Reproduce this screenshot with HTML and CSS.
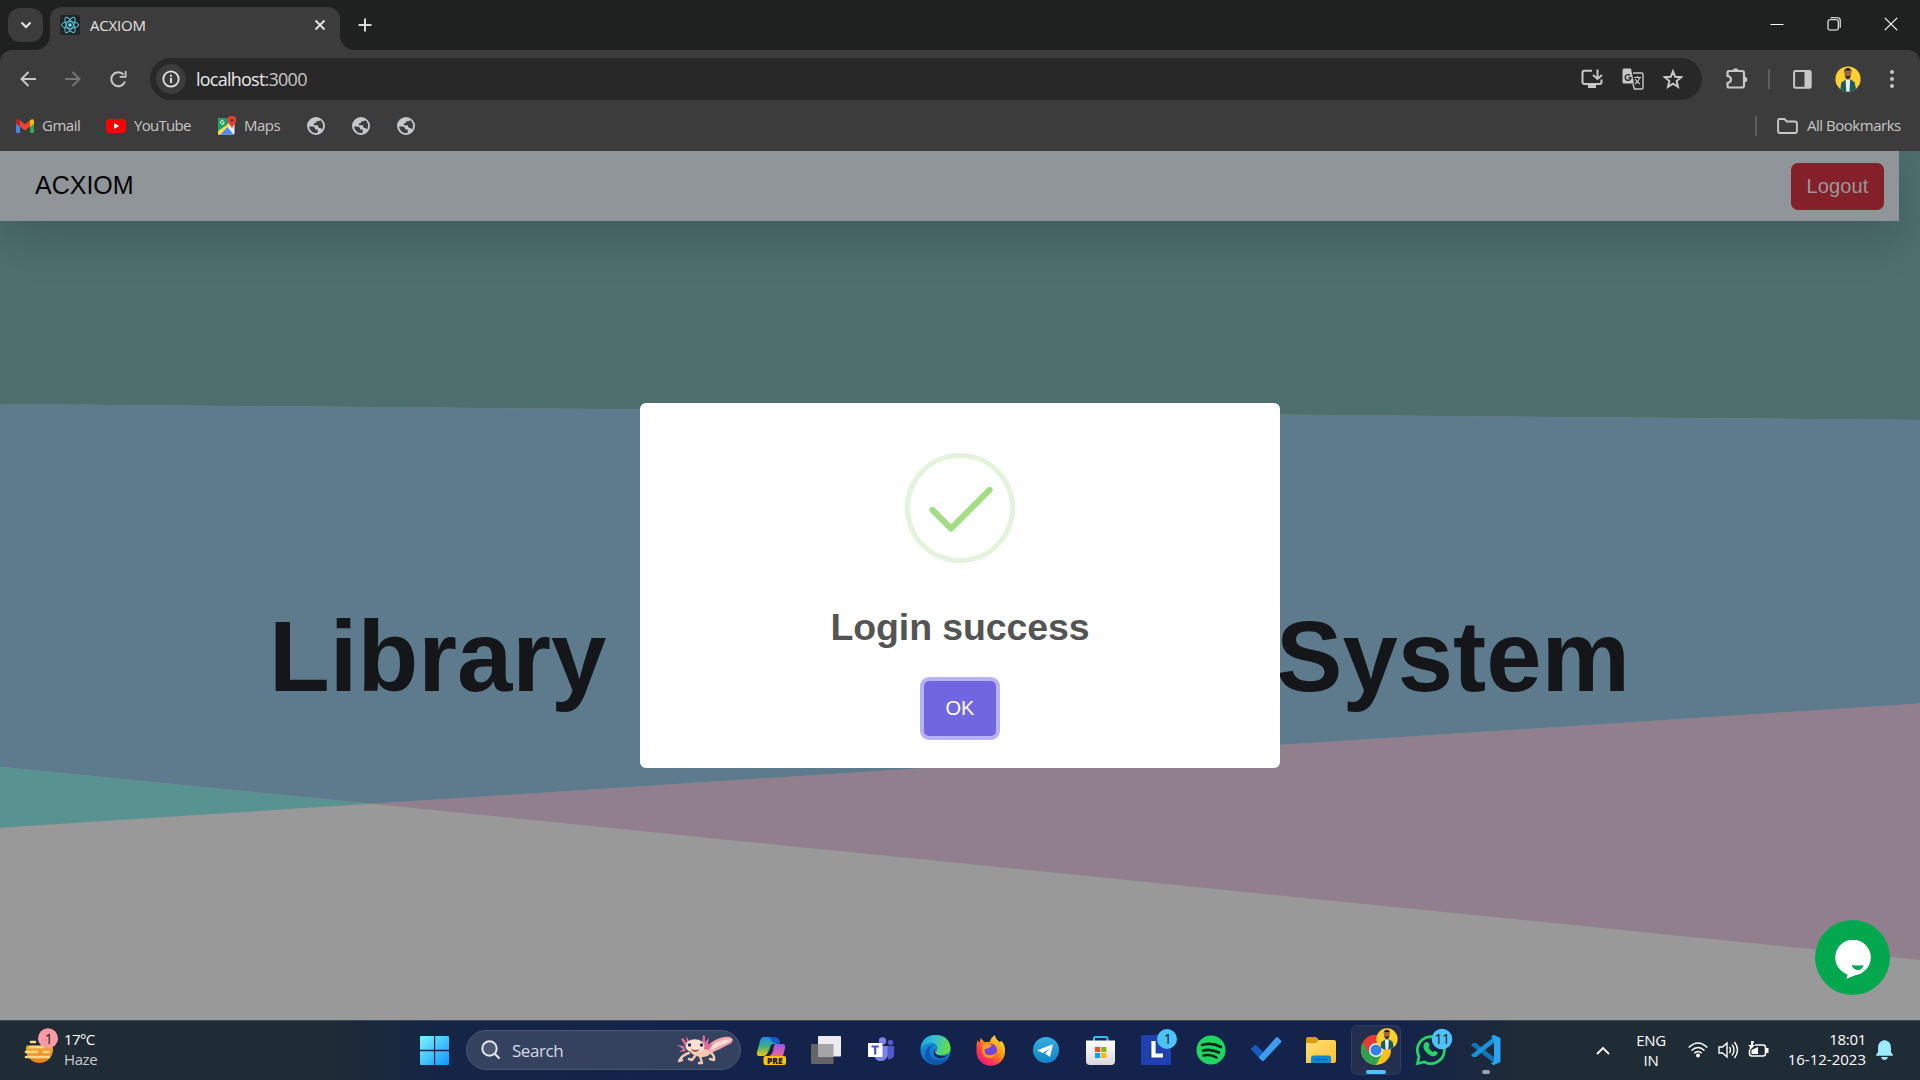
FILE: index.html
```html
<!DOCTYPE html>
<html lang="en">
<head>
<meta charset="utf-8">
<title>ACXIOM</title>
<link rel="stylesheet" href="styles.css">
</head>
<body>
<svg width="0" height="0" class="defs">
  <defs>
    <linearGradient id="win" x1="0" y1="0" x2="1" y2="1"><stop offset="0" stop-color="#7df3ff"/><stop offset="1" stop-color="#0f96fb"/></linearGradient>
    <linearGradient id="copA" x1="0" y1="0" x2="0" y2="1"><stop offset="0" stop-color="#1a8df0"/><stop offset=".5" stop-color="#42ae7d"/><stop offset="1" stop-color="#f4c70c"/></linearGradient>
    <linearGradient id="copB" x1="0" y1="0" x2="0" y2="1"><stop offset="0" stop-color="#9a57f0"/><stop offset="1" stop-color="#f2648f"/></linearGradient>
    <linearGradient id="edgeA" x1="0" y1="0" x2="1" y2=".3"><stop offset="0" stop-color="#1b9de2"/><stop offset=".5" stop-color="#35c1d0"/><stop offset="1" stop-color="#62dc4a"/></linearGradient>
    <linearGradient id="edgeB" x1="0" y1="0" x2="0" y2="1"><stop offset="0" stop-color="#1b9de2"/><stop offset="1" stop-color="#0c64c5"/></linearGradient>
    <linearGradient id="fox" x1="1" y1="0" x2=".2" y2="1"><stop offset="0" stop-color="#fff44f"/><stop offset=".45" stop-color="#ff980e"/><stop offset=".75" stop-color="#ff3750"/><stop offset="1" stop-color="#e31587"/></linearGradient>
    <linearGradient id="fold" x1="0" y1="0" x2="1" y2="1"><stop offset="0" stop-color="#ffe07a"/><stop offset="1" stop-color="#fbc02d"/></linearGradient>
    <linearGradient id="store" x1="0" y1="0" x2="0" y2="1"><stop offset="0" stop-color="#fff"/><stop offset="1" stop-color="#d9d9dd"/></linearGradient>
    <linearGradient id="tg" x1="0" y1="0" x2="0" y2="1"><stop offset="0" stop-color="#37aee2"/><stop offset="1" stop-color="#1283c4"/></linearGradient>
    <linearGradient id="sun" x1="0" y1="0" x2="0" y2="1"><stop offset="0" stop-color="#f6c445"/><stop offset="1" stop-color="#ef7a17"/></linearGradient>
    <clipPath id="round"><circle cx="13" cy="13" r="12.6"/></clipPath>
    <symbol id="globe" viewBox="0 0 24 24"><path fill="#c4c7cb" d="M12 0a12 12 0 1 0 0 24 12 12 0 0 0 0-24zM2.700 12.600H7c2.200 0 4 1.700 4 3.900h3.300v4.500A9.300 9.300 0 0 1 2.700 12.600zm17.400 3.900c-1-1.600-2.200-2-4.200-2l-1.600-3.400H9.200V8.300c2.600 0 3.200-.6 3.200-2.800h2.800c1.300 0 2-.7 2.200-1.500a9.400 9.400 0 0 1 2.700 12.500z"/></symbol>
    <symbol id="person" viewBox="0 0 26 26"><g clip-path="url(#round)"><rect width="26" height="26" fill="#fdd02f"/><path fill="#1d5a5c" d="M5 26l1.300-9.500 5-3.200h4l4.300 3 2 9.700z"/><path fill="#e8f2f2" d="M10.600 13.500h4.500l-.6 12.500h-3.200z"/><ellipse cx="12.800" cy="7.700" rx="3.300" ry="4.500" fill="#9a6647"/><path fill="#231a18" d="M9 7.200c-.6-7 8.400-7 7.700 0l-.9-2.600H10zM10 9.500c1 1.200 4.600 1.200 5.600 0-.3 4.800-5.200 4.800-5.600 0z"/></g></symbol>
  </defs>
</svg>

<header class="tabstrip">
  <button class="tab-search"><svg width="12" height="8" viewBox="0 0 12 8"><path d="M1.500 1.500L6 6l4.500-4.500" fill="none" stroke="#e3e3e3" stroke-width="2.200"/></svg></button>
  <div class="tab">
    <svg class="favicon" viewBox="0 0 20 20"><rect width="20" height="20" rx="2" fill="#222526"/><g fill="none" stroke="#58c4dc" stroke-width="1"><ellipse cx="10" cy="10" rx="8.600" ry="3.300"/><ellipse cx="10" cy="10" rx="8.600" ry="3.300" transform="rotate(60 10 10)"/><ellipse cx="10" cy="10" rx="8.600" ry="3.300" transform="rotate(120 10 10)"/></g><circle cx="10" cy="10" r="1.700" fill="#6fe0f5"/></svg>
    <span class="tab-title">ACXIOM</span>
    <svg width="12" height="12" viewBox="0 0 12 12"><path d="M1.500 1.500l9 9m0-9l-9 9" stroke="#e3e3e3" stroke-width="1.900"/></svg>
  </div>
  <svg class="new-tab" width="14" height="14" viewBox="0 0 14 14"><path d="M7 .5v13M.5 7h13" stroke="#d8d8d8" stroke-width="2"/></svg>
  <div class="window-controls">
    <svg width="14" height="14" viewBox="0 0 14 14"><path d="M.5 7.500h13" stroke="#fff" stroke-width="1"/></svg>
    <svg width="14" height="14" viewBox="0 0 14 14" fill="none" stroke="#fff" stroke-width="1.100"><rect x="1" y="2.700" width="10.300" height="10.300" rx="1.800"/><path d="M3.500.7h7.200q2.500 0 2.500 2.500v7.500"/></svg>
    <svg width="14" height="14" viewBox="0 0 14 14"><path d="M.8.8l12.400 12.400m0-12.400L.8 13.200" stroke="#fff" stroke-width="1.200"/></svg>
  </div>
</header>

<div class="chrome">
  <div class="toolbar">
    <div class="nav-buttons">
      <svg width="16" height="16" viewBox="0 0 16 16"><path d="M16 8H2M8.500 1L1.500 8l7 7" fill="none" stroke="#c7c7c7" stroke-width="2"/></svg>
      <svg width="16" height="16" viewBox="0 0 16 16"><path d="M0 8h14M7.500 1l7 7-7 7" fill="none" stroke="#757575" stroke-width="2"/></svg>
      <svg width="17" height="17" viewBox="0 0 17 17"><path d="M15 10.500A7 7 0 1 1 13.500 3.500" fill="none" stroke="#c7c7c7" stroke-width="2"/><path d="M16.500 0v6.800H9.700V5h5V0z" fill="#c7c7c7"/></svg>
    </div>
    <div class="omnibox">
      <span class="site-info"><svg width="18" height="18" viewBox="0 0 18 18"><circle cx="9" cy="9" r="7.700" fill="none" stroke="#e3e3e3" stroke-width="1.800"/><path d="M9 8v5M9 4.800v1.900" stroke="#e3e3e3" stroke-width="1.900"/></svg></span>
      <span class="url">localhost<span class="port">:3000</span></span>
      <div class="omni-icons">
        <svg width="22" height="20" viewBox="0 0 22 20"><path d="M11 1.800H3.500Q1.500 1.800 1.500 4v9q0 2 2 2h15q2 0 2-2v-2.500" fill="none" stroke="#c7c7c7" stroke-width="2"/><path d="M7 15h8v4H7z" fill="#c7c7c7"/><path d="M16.500.5v9M12 6l4.500 4L21 6" fill="none" stroke="#c7c7c7" stroke-width="2"/></svg>
        <svg width="22" height="22" viewBox="0 0 22 22"><path d="M2 .5h7l3 15H2q-1.500 0-1.500-1.500V2Q.5.5 2 .5z" fill="#c7c7c7"/><path d="M11 5h8.500q1.500 0 1.500 1.500V20q0 1-1.500 1H12.500l-1.600-5" fill="none" stroke="#c7c7c7" stroke-width="1.400"/><path d="M8.200 7.500a2.900 2.900 0 1 0 .8 2.200H6.300" fill="none" stroke="#292929" stroke-width="1.400"/><path d="M12 9.500h7M15.500 8v1.500M17.800 9.500q-1.300 4-4.800 6.500M13.200 11q1.500 3 4.800 5" fill="none" stroke="#c7c7c7" stroke-width="1.200"/></svg>
        <svg width="20" height="20" viewBox="0 0 20 20"><path d="M10 2.300l2.200 5.500 5.900.4-4.500 3.800 1.400 5.800-5-3.200-5 3.200L6.400 12 1.900 8.200l5.900-.4z" fill="none" stroke="#c7c7c7" stroke-width="2"/></svg>
      </div>
    </div>
    <div class="toolbar-icons">
      <svg width="22" height="22" viewBox="0 0 22 22"><path d="M3 3h13q2 0 2 2v12.500q0 2-2 2H3q-1.500 0-1.500-1.500v-3q3.500-.5 3.500-3.500T1.500 8V4.500Q1.500 3 3 3z" fill="none" stroke="#c7c7c7" stroke-width="2.200"/><path d="M6.800 3a2.800 2.800 0 0 1 5.600 0zM18.500 8.700a2.800 2.800 0 0 1 0 5.600z" fill="#c7c7c7"/></svg>
      <i class="sep"></i>
      <svg width="19" height="19" viewBox="0 0 19 19"><rect x="1.100" y="1.100" width="16.600" height="16.600" rx="1.500" fill="none" stroke="#c7c7c7" stroke-width="2"/><path d="M11.500 1H17v17h-5.500z" fill="#c7c7c7"/></svg>
      <svg class="avatar" width="26" height="26"><use href="#person"/></svg>
      <svg width="4" height="18" viewBox="0 0 4 18" fill="#c7c7c7"><circle cx="2" cy="2" r="2"/><circle cx="2" cy="9" r="2"/><circle cx="2" cy="16" r="2"/></svg>
    </div>
  </div>
  <div class="bookmarks">
    <svg width="18" height="14" viewBox="0 0 18 14"><path fill="#4285f4" d="M0 2.500l4 3V14H1.200Q0 14 0 12.800z"/><path fill="#34a853" d="M18 2.500l-4 3V14h2.800Q18 14 18 12.800z"/><path fill="#fbbc04" d="M14 1.200Q18-1.300 18 2.200v2.600l-4 3z"/><path fill="#c5221f" d="M0 2.200Q0-1.300 4 1.200v6.500l-4-3z"/><path fill="#ea4335" d="M4 1.300l5 3.900 5-3.900v6.500l-5 3.800-5-3.800z"/></svg>
    <span class="bm-gmail">Gmail</span>
    <svg width="20" height="14" viewBox="0 0 20 14"><rect width="20" height="14" rx="3.500" fill="#f00"/><path fill="#fff" d="M8 4l5.200 3L8 10z"/></svg>
    <span class="bm-youtube">YouTube</span>
    <svg width="18" height="19" viewBox="0 0 18 19"><rect y="2" width="16.500" height="16.500" rx="1.500" fill="#f1f3f4"/><path fill="#1fa15d" d="M1.500 2H12L9 10 0 17V3.500Q0 2 1.500 2z"/><path fill="#ffd64c" d="M0 15l10-7 1.500 2L2.500 18.500H0z"/><path fill="#4c8bf5" d="M2.500 18.500L9.500 11l6 7.500z"/><path fill="#e54335" d="M14 0c-5.500 0-5.500 5.300-3 8 1.800 2 2.500 2.500 2.700 4.500h.6c.2-2 1-2.700 2.500-4.500 2.200-2.700 2.200-8-2.800-8z"/><circle cx="14" cy="4.200" r="1.500" fill="#7b231e"/><path d="M5.700 5a1.900 1.900 0 1 0 .5 1.700H4.500" fill="none" stroke="#fff" stroke-width="1"/></svg>
    <span class="bm-maps">Maps</span>
    <div class="globes"><svg width="18" height="18"><use href="#globe"/></svg><svg width="18" height="18"><use href="#globe"/></svg><svg width="18" height="18"><use href="#globe"/></svg></div>
    <div class="all-bookmarks">
      <i class="sep"></i>
      <svg width="21" height="16" viewBox="0 0 21 16"><path d="M2.500 1h5l2.300 2.500H18q1.900 0 1.900 1.900v7.700q0 1.900-1.900 1.900H3q-1.900 0-1.900-1.900V2.400Q1.100 1 2.500 1z" fill="none" stroke="#c7c7c7" stroke-width="1.900"/></svg>
      <span class="bm-all">All Bookmarks</span>
    </div>
  </div>
</div>

<main class="page">
  <svg class="backdrop" viewBox="0 0 1920 869" preserveAspectRatio="none">
    <rect width="1920" height="869" fill="#999"/>
    <path fill="#589391" d="M0 615.700L371 652.800 0 676.700z"/>
    <path fill="#917f8e" d="M371 652.800L1920 552.500V809z"/>
    <path fill="#5d7b8c" d="M0 253l1920 16v283.500L371 652.800 0 615.700z"/>
    <path fill="#4d6f6e" d="M0 0h1920v269L0 253z"/>
  </svg>
  <nav class="navbar"><span class="brand">ACXIOM</span><button class="logout">Logout</button></nav>
  <h1 class="hero"><span>Library</span><span>System</span></h1>
  <div class="overlay">
    <section class="modal">
      <svg class="success" width="110" height="110" viewBox="0 0 110 110"><circle cx="55" cy="55" r="52.500" fill="none" stroke="#e4f4dc" stroke-width="5"/><path d="M27.500 57L46 75.500 84.500 37" fill="none" stroke="#a5dc86" stroke-width="6.200" stroke-linecap="round" stroke-linejoin="round"/></svg>
      <h2>Login success</h2>
      <button class="ok">OK</button>
    </section>
  </div>
  <button class="chat"><svg width="36" height="39" viewBox="0 0 36 39"><circle cx="18" cy="17.500" r="17.800" fill="#fff"/><path d="M13 33l-1.500 5.800L27 32.500z" fill="#fff"/><path d="M16.500 25q6.500 1.200 12 0-1 5-5.500 5t-6.500-5z" fill="#03a84e"/></svg></button>
</main>

<footer class="taskbar">
  <div class="weather">
    <svg width="36" height="38" viewBox="0 0 36 38"><circle cx="15.500" cy="21.500" r="13.500" fill="url(#sun)"/><path d="M0 0h36v17.500H0z" fill="#1f2b35"/><path d="M7 14h4M6 19h13M2 24h11M20 24h5M2 29h23" stroke="#f5d88a" stroke-width="2.600" stroke-linecap="round"/><circle cx="24" cy="10.300" r="10" fill="#ff99a4"/><text x="24.500" y="15.500" class="badge">1</text></svg>
    <div class="weather-text"><span>17°C</span><span class="haze">Haze</span></div>
  </div>
  <svg class="start" width="29" height="29" viewBox="0 0 29 29"><path fill="url(#win)" d="M1 0h13v13.800H0V1q0-1 1-1zM15.200 0H28q1 0 1 1v12.800H15.200zM0 15.200h14V29H1q-1 0-1-1zM15.200 15.200H29V28q0 1-1 1H15.200z"/></svg>
  <div class="search">
    <svg width="20" height="20" viewBox="0 0 20 20"><circle cx="8.500" cy="8.500" r="7.200" fill="#ffffff20" stroke="#e4e7ee" stroke-width="2"/><path d="M13.500 13.500l5 5" stroke="#e4e7ee" stroke-width="2.200"/></svg>
    <span>Search</span>
    <svg class="axolotl" width="56" height="32" viewBox="0 0 56 32"><path d="M27 17Q33 7 43 4t12.500 1q1.500 3-5 6-7 4-12 6l-7 4z" fill="#f0a5ae"/><path d="M34 12q9-7 21-7-5 5-13 7l-8 5z" fill="#fbded3"/><path d="M8 12L4 5l2-1 4 5-1-7 4 6M25 9l1-8 2 1v6l4-4-1 6 5 0-4 5-6 3M7 12L0 11l6 4-4 3 7-1" fill="#dd6f94"/><path d="M12 19Q5 21 2 27l3-1M23 22l2 7-3 0M34 19q4 3 3 7l-4-1M18 22l-3 4-3-1" fill="none" stroke="#f4c7ae" stroke-width="2.400" stroke-linecap="round" stroke-linejoin="round"/><path d="M13 16q11-3 21 1l-3 5q-9 3-16-2z" fill="#f6c8b3"/><ellipse cx="18" cy="12" rx="9.500" ry="6.800" fill="#fbe1d2"/><circle cx="12.500" cy="11" r="1.700" fill="#272a4e"/><circle cx="24.500" cy="11" r="1.700" fill="#272a4e"/><path d="M14 15q4 2 8.500 0-1 3-4.200 3T14 15z" fill="#ad5253"/></svg>
  </div>
  <div class="apps">
    <svg viewBox="0 0 55 60"><path d="M21 17h10q5 0 6 6l-5 1q-4-1-5 4l-3 6q-1 2-4 2h-4q-3 0-2-4l3-11q1-4 4-4z" fill="url(#copA)"/><path d="M24 17h7q5 0 6 6h-5q-3 0-4-3t-4-3z" fill="#1859c9"/><path d="M33 24h6q4 0 3 4l-2 8H26q3-1 4-5l1-5q0-2 2-2z" fill="url(#copB)"/><rect x="20.500" y="36" width="22.500" height="9" rx="2" fill="#ffc400"/><text x="31.800" y="43.700" class="pre">PRE</text></svg>
    <svg viewBox="0 0 55 60"><rect x="13" y="24" width="22.500" height="20" rx="1" fill="#656567"/><rect x="20" y="16" width="23" height="20.500" rx="1" fill="#ececf0"/><path d="M20 24h15.500v12.500H20z" fill="#a5a5a8"/></svg>
    <svg viewBox="0 0 55 60"><circle cx="29.500" cy="21" r="3.700" fill="#7b83eb"/><circle cx="37.500" cy="22.500" r="2.700" fill="#5059c9"/><path d="M31 26h10.200v8q0 5-6 5.500z" fill="#5059c9"/><path d="M20 26h14.500v9q-1 6-7 6-5 0-6-5z" fill="#7b83eb"/><rect x="15" y="23" width="14.500" height="14" rx=".7" fill="#fff"/><path d="M18.500 26.500h7.300M22.200 26v8.500" stroke="#4b53bc" stroke-width="2.200"/></svg>
    <svg viewBox="0 0 55 60"><circle cx="27.500" cy="30" r="15" fill="url(#edgeB)"/><path d="M12.500 29Q14 15 27.500 15q13 0 15 12 1 8-9 8-6 0-7-2 3-2 3-5-1-6-8-5-6 0-9 6z" fill="url(#edgeA)"/><path d="M26.500 25q-6 2-5 9 3 8 13 6 5-1 7-4-3 8-12 9-13-1-12-12 1-8 9-8z" fill="#0f58a8"/><path d="M29 27q-4 3-1 7 5 4 12 1-6 5-12 2-5-5 1-10z" fill="#14234b"/></svg>
    <svg viewBox="0 0 55 60"><path d="M13.500 25l1-5 2 3 1-5 4 4h5q1-4 5-7 1 4 5 7l2-1q4 4 3.500 11A14.200 14.200 0 0 1 13.500 31z" fill="url(#fox)"/><circle cx="27.500" cy="30" r="6.500" fill="#7744d8"/><path d="M20 25q5-3 9 0l-3 3-4 1q-2 5 3 6 6 1 8-3-1 6-7 6-7-1-7-8z" fill="#ff9c1b"/></svg>
    <svg viewBox="0 0 55 60"><circle cx="28" cy="30" r="13" fill="url(#tg)"/><path d="M20 30l14-5.500q1 0 .7 1L32 37l-5-3.500L32.500 28 25 33l-4.800-2q-1-.5-.2-1z" fill="#fff"/></svg>
    <svg viewBox="0 0 55 60"><path d="M21 23v-4.500q0-1.500 1.500-1.500h10.500q1.500 0 1.500 1.500V23" fill="none" stroke="#2fc0ee" stroke-width="2"/><path d="M13 20.500h29V41q0 4-4 4H17q-4 0-4-4z" fill="url(#store)"/><path fill="#f25022" d="M22 27h5.200v5H22z"/><path fill="#7fba00" d="M28.200 27h5.200v5h-5.200z"/><path fill="#00a4ef" d="M22 33h5.200v5H22z"/><path fill="#ffb900" d="M28.200 33h5.200v5h-5.200z"/></svg>
    <svg viewBox="0 0 55 60"><path fill="#2040b2" d="M13 15h30v30H13z"/><path fill="#143d67" d="M23 21l-2 18 3-2z"/><path d="M25.500 21v14.500H35" fill="none" stroke="#fff" stroke-width="4.200"/><circle cx="39" cy="19" r="10" fill="#4cc2ff"/><text x="39.500" y="24" class="badge">1</text></svg>
    <svg viewBox="0 0 55 60"><circle cx="28" cy="30" r="14.500" fill="#1ed760"/><path d="M19 25q10-3 19 2M20 30.500q8-2 16 2M20.500 35.500q7-1.700 13 2" fill="none" stroke="#10251a" stroke-width="2.600" stroke-linecap="round"/></svg>
    <svg viewBox="0 0 55 60"><path d="M12.500 29l5-4.500 8 8L24 41z" fill="#185abd"/><path d="M20.500 37.500L38 17.500q1-1 2 0l3 3q.8 1 0 2L25 41.500z" fill="#3e9bed"/></svg>
    <svg viewBox="0 0 55 60"><path d="M13 19q0-2 2-2h8l3 3v6H13z" fill="#db9d09"/><path d="M13 23h10l3-3h15q2 0 2 2v19q0 2-2 2H13z" fill="url(#fold)"/><path d="M18 43v-5q0-2.500 2.500-2.500h15q2.500 0 2.500 2.500v5z" fill="#1583d8"/><path d="M22 39.500h12" stroke="#0a5da7"/></svg>
    <svg viewBox="0 0 55 60"><rect x="3.500" y="5.500" width="49" height="49" rx="5" fill="#242f50" stroke="#303c5e"/><circle cx="28" cy="30" r="15" fill="#fbc21b"/><path d="M28 30L14 24Q18 15 28 15q10 0 14 8z" fill="#e53c32"/><path d="M14.800 23A15 15 0 0 0 28 45l7-13-7-2z" fill="#30a150"/><path d="M14.800 23Q19 15 28 15v8L21 33z" fill="#e53c32"/><circle cx="28" cy="30" r="7" fill="#fff"/><circle cx="28" cy="30" r="5.600" fill="#357fe8"/><use href="#person" x="28" y="8" width="22" height="22"/><rect x="18" y="50" width="20" height="4" rx="2" fill="#4cc2ff"/></svg>
    <svg viewBox="0 0 55 60"><path d="M14.500 43.500l1.500-7A13.500 13.500 0 1 1 21.500 42z" fill="none" stroke="#25d366" stroke-width="2.800"/><path d="M23.500 22q3 0 3 4l-1 2 4 4 2-1q4 1 3 3-3 4-8 1-7-5-6-10 1-3 3-3z" fill="#25d366"/><circle cx="39" cy="19" r="10.300" fill="#4cc2ff"/><text x="39" y="24" class="badge">11</text></svg>
    <svg viewBox="0 0 55 60"><path d="M13 25l2-2 3 0 19 15v6z" fill="#1175b9"/><path d="M13 35l2 2h3L37 22v-6z" fill="#1b91d6"/><path d="M36 15l6.500 3v24L36 45q-2 0-3-2 3 0 3-3V20q0-2-3-3 1-2 3-2z" fill="#2ca3ef"/><rect x="24" y="50" width="8" height="4" rx="2" fill="#9aa2ad"/></svg>
  </div>
  <div class="tray">
    <svg class="up" width="14" height="9" viewBox="0 0 14 9"><path d="M1 8l6-6 6 6" fill="none" stroke="#fff" stroke-width="1.800"/></svg>
    <div class="lang"><span>ENG</span><span>IN</span></div>
    <svg class="wifi" width="20" height="16" viewBox="0 0 20 16"><g fill="none" stroke="#fff" stroke-width="1.500"><path d="M.7 5.500Q10-3.500 19.300 5.500M3.500 8.500q6.500-6 13 0M6.200 11.300q3.800-3.500 7.600 0"/></g><circle cx="10" cy="13.500" r="2" fill="#fff"/></svg>
    <svg class="vol" width="21" height="18" viewBox="0 0 21 18"><g fill="none" stroke="#fff" stroke-width="1.400"><path d="M1 6h3.500L9 2v14l-4.500-4H1z"/><path d="M11.500 6q2 3 0 6M14 3.500q4 5.500 0 11M16.500 1q6 8 0 16"/></g></svg>
    <svg class="bat" width="21" height="18" viewBox="0 0 21 18"><path d="M7 4h8q2.500 0 2.500 2.500v6q0 2.500-2.500 2.500H4q-2.500 0-2.500-2.500V9" fill="none" stroke="#fff" stroke-width="1.500"/><path d="M3.500 9L10 6v7H3.500zM18 7h2.500v5H18zM3 0v4H0l2 2-1 4 6-6H5l1-4z" fill="#fff"/></svg>
    <div class="clock"><span>18:01</span><span class="date">16-12-2023</span></div>
    <svg class="bell" width="17" height="20" viewBox="0 0 17 20"><path d="M8.500 0Q15 1 15 8v4l2 3v.8H0V15l2-3V8Q2 1 8.500 0zM5 17h7q-1 3-3.500 3T5 17z" fill="#9be9ff"/></svg>
  </div>
</footer>
</body>
</html>
```
FILE: styles.css
```css
* { box-sizing: border-box; }
body {
  margin: 0;
  width: 1920px;
  height: 1080px;
  overflow: hidden;
  display: flex;
  flex-direction: column;
  background: #1f2120;
  font-family: "Open Sans", "Noto Sans", sans-serif;
}
.defs { position: absolute; }
svg { display: block; flex: none; }
button { border: 0; padding: 0; font: inherit; }
span { white-space: nowrap; }

/* tab strip */
.tabstrip { flex: none; height: 50px; display: flex; align-items: flex-start; background: #1f2120; padding-left: 8px; }
.tab-search {
  width: 35px; height: 34px; margin-top: 8px; border-radius: 12px; background: #3c3c3c;
  display: flex; align-items: center; justify-content: center;
}
.tab {
  position: relative; width: 290px; height: 43px; margin: 7px 0 0 7px; padding: 0 14px 7px 10px;
  display: flex; align-items: center; border-radius: 12px 12px 0 0; background: #3c3c3c;
}
.tab::before, .tab::after { content: ""; position: absolute; bottom: 0; width: 14px; height: 14px; }
.tab::before { left: -14px; background: radial-gradient(circle at 0 0, transparent 13.500px, #3c3c3c 14px); }
.tab::after { right: -14px; background: radial-gradient(circle at 100% 0, transparent 13.500px, #3c3c3c 14px); }
.favicon { width: 20px; height: 20px; }
.tab-title { flex: 1; margin-left: 10px; font-size: 15px; letter-spacing: -.2px; color: #e3e3e3; }
.new-tab { margin: 18px 0 0 18px; }
.window-controls { margin: 17px 22px 0 auto; display: flex; gap: 43px; }

/* address and bookmark rows */
.chrome { flex: none; height: 101px; background: #3c3c3c; border-radius: 12px 12px 0 0; }
.toolbar { display: flex; align-items: center; height: 58px; }
.nav-buttons { width: 150px; display: flex; gap: 29px; padding-left: 20px; }
.omnibox { width: 1552px; height: 42px; border-radius: 21px; background: #282828; display: flex; align-items: center; padding: 0 19px 0 6px; }
.site-info { width: 30px; height: 30px; border-radius: 50%; background: #3c3c3c; display: flex; align-items: center; justify-content: center; }
.url { margin-left: 10px; font-size: 18px; letter-spacing: -.76px; color: #e8e8e8; }
.port { color: #c7c7c7; }
.omni-icons { margin-left: auto; display: flex; align-items: center; gap: 19px; }
.toolbar-icons { margin-left: 24px; display: flex; align-items: center; }
.sep { width: 2px; height: 20px; background: #5f5f5f; margin: 0 23px 0 20px; }
.avatar { margin: 0 29px 0 23px; }
.bookmarks { height: 35px; display: flex; align-items: center; padding: 0 18px 0 16px; font-size: 15px; color: #c7c7c7; }
.bookmarks span { position: relative; top: -1px; }
.bookmarks > span { margin-left: 8px; }
.bm-gmail { width: 64px; letter-spacing: -.5px; }
.bm-youtube { width: 84px; letter-spacing: -.7px; }
.bm-maps { width: 63px; letter-spacing: -.5px; }
.globes { display: flex; gap: 27px; }
.all-bookmarks { margin-left: auto; display: flex; align-items: center; }
.all-bookmarks .sep { margin: 0 20px 0 0; }
.bm-all { width: 95px; margin-left: 9px; letter-spacing: -.48px; }

/* page */
.page { position: relative; flex: none; height: 869px; overflow: hidden; font-family: "Liberation Sans", Arial, sans-serif; }
.backdrop { position: absolute; inset: 0; width: 1920px; height: 869px; }
.navbar {
  position: relative; width: 1899px; height: 70px; padding: 0 15px 0 35px;
  display: flex; align-items: center; justify-content: space-between;
  background: #909599; box-shadow: 0 16px 48px rgba(0, 0, 0, .175);
}
.brand { font-size: 25px; line-height: 30px; padding-bottom: 2px; color: #050505; }
.logout { width: 93px; height: 47px; border-radius: 7px; background: #84202a; color: #999; font-size: 20px; letter-spacing: .15px; }
.hero {
  position: relative; width: 1899px; margin: 376px 0 0; padding: 0 269px 0 269px;
  display: flex; justify-content: space-between; font-size: 99.500px; line-height: 120px; color: #141619;
}
.overlay { position: absolute; inset: 0; display: flex; justify-content: center; align-items: flex-start; padding-top: 252px; }
.modal {
  width: 640px; height: 365px; background: #fff; border-radius: 6px;
  display: flex; flex-direction: column; align-items: center; padding-top: 50px;
}
.modal h2 { margin: 41px 0 0; font-size: 37.500px; line-height: 46px; letter-spacing: -.1px; color: #545454; }
.ok { width: 72px; height: 55px; margin-top: 31px; border-radius: 5px; background: #7066e0; color: #fff; font-size: 20px; box-shadow: 0 0 0 4px #b8b3f0; }
.chat {
  position: absolute; left: 1815px; top: 769px; width: 75px; height: 75px; border-radius: 50%; background: #03a84e;
  display: flex; align-items: center; justify-content: center; padding-top: 3px;
}

/* taskbar */
.taskbar {
  flex: none; height: 60px; display: flex; align-items: center; color: #fff; box-shadow: inset 0 1px #3b4a56;
  background: linear-gradient(90deg, #1f2b35 0, #1f2b35 330px, #152546 440px, #14234b 700px, #14234b 1180px, #14234b 1400px, #1f2b35 1520px);
}
.weather { width: 420px; padding-left: 24px; display: flex; align-items: center; }
.weather svg { margin-top: -7px; }
.weather-text { margin: -3px 0 0 4px; display: flex; flex-direction: column; font-size: 15px; line-height: 20px; letter-spacing: -.6px; }
.haze { color: #c8ccd0; letter-spacing: -.4px; }
.badge { font-size: 14px; fill: #151515; text-anchor: middle; letter-spacing: -.5px; }
.pre { font-size: 8.500px; font-weight: 800; fill: #161616; text-anchor: middle; }
.start { margin-right: 17px; }
.search {
  width: 275px; height: 40px; border-radius: 20px; background: #34415f; border: 1px solid #4b5874;
  display: flex; align-items: center; padding: 0 7px 0 14px; font-size: 17px; color: #d6dae4;
}
.search span { margin-left: 11px; letter-spacing: -.45px; }
.axolotl { margin-left: auto; }
.apps { margin-left: 2px; display: flex; }
.apps svg { width: 55px; height: 60px; }
.tray { flex: 1; display: flex; align-items: center; font-size: 15px; line-height: 20px; }
.up { margin-left: 83px; }
.lang { width: 30px; margin: -1px 0 0 26px; display: flex; flex-direction: column; align-items: center; letter-spacing: -.35px; }
.wifi { margin-left: 22px; }
.vol { margin-left: 10px; }
.bat { margin-left: 9px; }
.clock { width: 78px; margin: -3px 0 0 19px; display: flex; flex-direction: column; align-items: flex-end; letter-spacing: -.3px; }
.date { letter-spacing: 0; }
.bell { margin-left: 10px; }
```
